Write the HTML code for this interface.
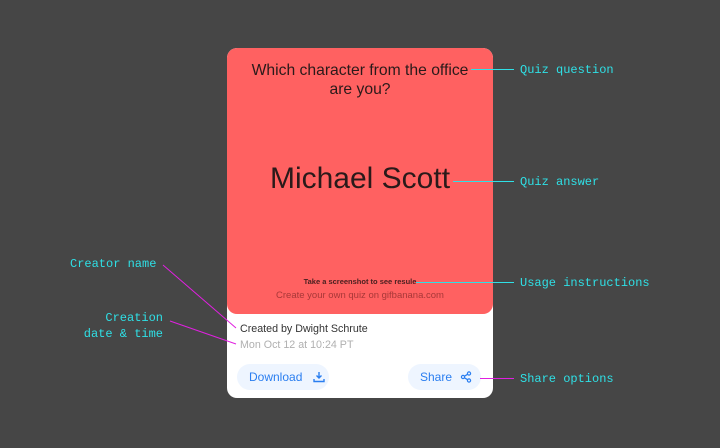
<!DOCTYPE html>
<html><head><meta charset="utf-8"><style>
body{margin:0;width:720px;height:448px;background:#464646;position:relative;overflow:hidden;font-family:"Liberation Sans",sans-serif}
.card{position:absolute;left:227px;top:48px;width:266px;height:350px;background:#fff;border-radius:10px;overflow:hidden}
.red{position:absolute;left:0;top:0;width:266px;height:266px;background:#ff6161;border-radius:0 0 10px 10px}
.t{position:absolute;white-space:nowrap}
.m{font-family:"Liberation Mono",monospace;color:#2fe0e6;font-size:12px;position:absolute;white-space:nowrap}
.btn{position:absolute;top:316px;height:26px;border-radius:13px;background:#eef5ff;color:#2a7ef0;font-size:12px;line-height:26px}
</style></head><body>
<div class="card">
 <div class="red">
  <div class="t" style="left:0;width:266px;text-align:center;top:13px;font-size:15.7px;line-height:19px;color:#2a1a1a">Which character from the office<br>are you?</div>
  <div class="t" style="left:0;width:266px;text-align:center;top:114px;font-size:30px;color:#2a1a1a">Michael Scott</div>
  <div class="t" style="left:0;width:266px;text-align:center;top:229px;font-size:7.5px;font-weight:bold;color:#4a2020">Take a screenshot to see resule</div>
  <div class="t" style="left:0;width:266px;text-align:center;top:242px;font-size:9.5px;color:#a83838">Create your own quiz on gifbanana.com</div>
 </div>
 <div class="t" style="left:13px;top:275px;font-size:10.7px;color:#333">Created by Dwight Schrute</div>
 <div class="t" style="left:13px;top:291px;font-size:10.7px;color:#b0b0b0">Mon Oct 12 at 10:24 PT</div>
 <div class="btn" style="left:10px;width:92px"><span style="margin-left:12px">Download</span>
  <svg style="position:absolute;left:76px;top:7px" width="12" height="12" viewBox="0 0 12 12" fill="none" stroke="#2a7ef0" stroke-width="1.4"><path d="M6 1v6M3.5 4.5L6 7l2.5-2.5M1 8v2.5h10V8"/></svg></div>
 <div class="btn" style="left:181px;width:73px"><span style="margin-left:12px">Share</span>
  <svg style="position:absolute;left:52px;top:7px" width="12" height="12" viewBox="0 0 12 12" fill="none" stroke="#2a7ef0" stroke-width="1.2"><circle cx="9" cy="2.5" r="1.6"/><circle cx="9" cy="9.5" r="1.6"/><circle cx="3" cy="6" r="1.6"/><path d="M4.4 5.2L7.6 3.3M4.4 6.8L7.6 8.7"/></svg></div>
</div>
<svg style="position:absolute;left:0;top:0" width="720" height="448">
 <g stroke="#2fe0e6" stroke-width="1"><path d="M471 69.5H514M453 181.5H514M416 282.5H514"/></g>
 <path d="M480 378.5H514" stroke="#e020e0"/>
 <path d="M163 265L236 328M170 321L236 344" stroke="#e020e0"/>
</svg>
<div class="m" style="left:520px;top:63px">Quiz question</div>
<div class="m" style="left:520px;top:175px">Quiz answer</div>
<div class="m" style="left:520px;top:276px">Usage instructions</div>
<div class="m" style="left:520px;top:372px">Share options</div>
<div class="m" style="left:70px;top:257px">Creator name</div>
<div class="m" style="left:70px;top:310px;width:93px;text-align:right;line-height:16px">Creation<br>date &amp; time</div>
</body></html>
